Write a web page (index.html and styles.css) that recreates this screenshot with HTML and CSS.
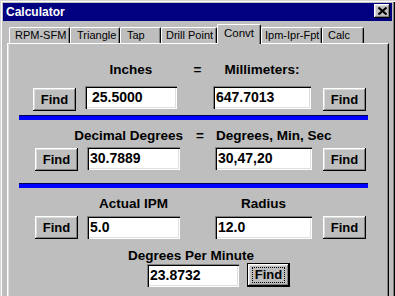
FILE: index.html
```html
<!DOCTYPE html>
<html>
<head>
<meta charset="utf-8">
<title>Calculator</title>
<link rel="stylesheet" href="styles.css">
</head>
<body>
<div class="window">
  <div class="titlebar">
    <span class="title">Calculator</span>
    <div class="close">
      <svg width="9" height="8" viewBox="0 0 9 8"><path d="M0.5 0.5 L8.5 7.5 M8.5 0.5 L0.5 7.5" stroke="#000" stroke-width="2" fill="none"/></svg>
    </div>
  </div>
  <div class="tabs">
    <div class="tab t-rpm">RPM-SFM</div>
    <div class="tab t-tri">Triangle</div>
    <div class="tab t-tap">Tap</div>
    <div class="tab t-drill">Drill Point</div>
    <div class="tab t-convt active">Convt</div>
    <div class="tab t-ipm">Ipm-Ipr-Fpt</div>
    <div class="tab t-calc">Calc</div>
  </div>
  <div class="panel">
    <div class="sec sec1">
      <div class="grid g1 labels">
        <span class="lbl lbl-a">Inches</span>
        <span class="lbl eq">=</span>
        <span class="lbl lbl-b">Millimeters:</span>
      </div>
      <div class="grid g1 controls c1">
        <div class="btn find-a drop">Find</div>
        <div class="field in-a wide-pad">25.5000</div>
        <div class="field in-b">647.7013</div>
        <div class="btn find-b drop">Find</div>
      </div>
    </div>
    <div class="bar bar1"></div>
    <div class="sec sec2">
      <div class="grid g2 labels">
        <span class="lbl lbl-a to-end">Decimal Degrees</span>
        <span class="lbl eq">=</span>
        <span class="lbl lbl-b to-start">Degrees, Min, Sec</span>
      </div>
      <div class="grid g2 controls c2">
        <div class="btn find-a drop1">Find</div>
        <div class="field in-a">30.7889</div>
        <div class="field in-b">30,47,20</div>
        <div class="btn find-b drop1">Find</div>
      </div>
    </div>
    <div class="bar bar2"></div>
    <div class="sec sec3">
      <div class="grid g2 labels">
        <span class="lbl lbl-a">Actual IPM</span>
        <span class="lbl lbl-b">Radius</span>
      </div>
      <div class="grid g2 controls c3">
        <div class="btn find-a">Find</div>
        <div class="field in-a">5.0</div>
        <div class="field in-b">12.0</div>
        <div class="btn find-b">Find</div>
      </div>
    </div>
    <div class="lbl dpm-label">Degrees Per Minute</div>
    <div class="row4">
      <div class="field dpm-field">23.8732</div>
      <div class="btn default"><span class="focus">Find</span></div>
    </div>
  </div>
</div>
</body>
</html>
```

FILE: styles.css
```css
* { box-sizing: border-box; }
html, body { margin: 0; padding: 0; }
body {
  width: 395px;
  height: 296px;
  overflow: hidden;
  background: #bebebe;
  font-family: "Liberation Sans", Arial, sans-serif;
  color: #000;
}
.window {
  width: 395px;
  height: 296px;
  padding: 3px 3px 0 3px;
  background: #bebebe;
  box-shadow: inset 1px 1px #d4d4d4, inset 2px 2px #fff, inset -1px 0 #000, inset -2px 0 #808080;
  display: flex;
  flex-direction: column;
  overflow: hidden;
}
.titlebar {
  height: 18px;
  flex: none;
  background: #000080;
  display: flex;
  align-items: flex-start;
  justify-content: space-between;
  padding-left: 3px;
  padding-right: 2px;
}
.title {
  color: #fff;
  font-weight: bold;
  font-size: 12px;
  line-height: 18px;
}
.close {
  margin-top: 1px;
  width: 16px;
  height: 14px;
  background: #c0c0c0;
  box-shadow: inset -1px -1px #000, inset 1px 1px #fff, inset -2px -2px #808080, inset 2px 2px #dfdfdf;
  display: flex;
  align-items: flex-start;
  padding: 3px 0 0 4px;
}
.close svg { display: block; }

.tabs {
  height: 22px;
  flex: none;
  display: flex;
  align-items: flex-end;
  padding-left: 6px;
}
.tab {
  height: 16px;
  font-size: 11px;
  line-height: 15px;
  text-align: left;
  padding-left: 5px;
  white-space: nowrap;
  border-top: 1px solid #fff;
  border-left: 1px solid #fff;
  border-right: 1px solid #000;
  border-top-left-radius: 2px;
  border-top-right-radius: 2px;
  box-shadow: inset -1px 0 #808080;
  background: #bebebe;
}
.t-rpm { width: 61px; }
.t-tri { width: 50px; padding-left: 6px; }
.t-tap { width: 41px; padding-left: 6px; }
.t-drill { width: 56px; padding-left: 4px; }
.t-convt { width: 44px; }
.t-ipm { width: 61px; padding-left: 3px; }
.t-calc { width: 42px; }
.tab.active {
  height: 20px;
  margin-bottom: -1px;
  padding-top: 1px;
  padding-left: 6px;
  position: relative;
  z-index: 1;
  font-size: 11.5px;
}

.panel {
  flex: 1;
  margin-left: 4px;
  width: 382px;
  border-top: 1px solid #fff;
  border-left: 1px solid #fff;
  border-right: 1px solid #000;
  box-shadow: inset -1px 0 #808080, inset 1px 0 #dfdfdf;
}

.grid { display: grid; }
.g1 {
  grid-template-columns: 43px 9px 92px 36px 98px 12px 43px;
  margin-left: 25px;
}
.g2 {
  grid-template-columns: 43px 9px 93px 35px 97px 11px 43px;
  margin-left: 27px;
}
.labels { align-items: start; }
.controls { align-items: start; }

.lbl {
  font-weight: bold;
  font-size: 13.5px;
  line-height: 16px;
  white-space: nowrap;
}
.lbl-a { grid-column: 3; justify-self: center; }
.eq { grid-column: 4; justify-self: center; padding-left: 5px; }
.lbl-b { grid-column: 5; justify-self: center; }
.lbl-a.to-end { justify-self: end; margin-right: -3px; }
.lbl-b.to-start { justify-self: start; margin-left: 1px; }

.find-a { grid-column: 1; }
.in-a { grid-column: 3; }
.in-b { grid-column: 5; }
.find-b { grid-column: 7; }

.sec1 { padding-top: 18px; }
.c1 { margin-top: 8px; }
.sec2 { margin-top: 8px; }
.c2 { margin-top: 3px; }
.sec3 { margin-top: 8px; }
.c3 { margin-top: 4px; }

.field {
  height: 23px;
  background: #fff;
  box-shadow: inset 1px 1px #808080, inset 2px 2px #000, inset -1px -1px #fff, inset -2px -2px #dfdfdf;
  font-weight: bold;
  font-size: 14px;
  line-height: 22px;
  padding-left: 3px;
  white-space: nowrap;
}
.field.wide-pad { padding-left: 7px; }

.btn {
  width: 43px;
  height: 23px;
  background: #bebebe;
  box-shadow: inset -1px -1px #000, inset 1px 1px #fff, inset -2px -2px #808080, inset 2px 2px #dcdcdc;
  font-weight: bold;
  font-size: 13px;
  display: flex;
  align-items: center;
  justify-content: center;
}
.btn.drop { margin-top: 2px; }
.btn.drop1 { margin-top: 1px; }

.bar {
  margin-left: 11px;
  width: 349px;
  height: 5px;
  background: #0000ff;
  border-top: 1px solid #000050;
}
.bar1 { margin-top: 4px; }
.bar2 { margin-top: 12px; }

.dpm-label { margin-left: 120px; margin-top: 9px; }
.row4 {
  display: flex;
  align-items: flex-start;
  gap: 8px;
  margin-left: 139px;
  margin-top: -1px;
}
.dpm-field { width: 92px; margin-top: 1px; }
.btn.default {
  height: 24px;
  border: 1px solid #000;
  box-shadow: inset -1px -1px #000, inset 1px 1px #fff, inset -2px -2px #808080, inset 2px 2px #dcdcdc;
}
.focus {
  border: 1px dotted #000;
  padding: 0 2px;
  line-height: 14px;
}
```
